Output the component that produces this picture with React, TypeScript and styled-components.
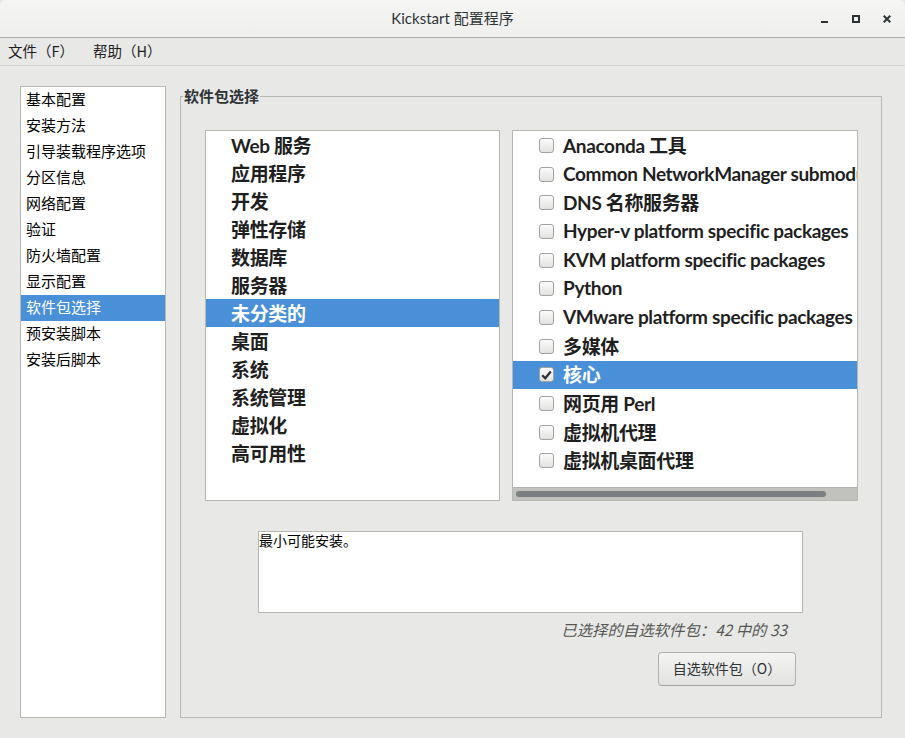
import React from "react";
import styled, { createGlobalStyle } from "styled-components";

const GlobalStyle = createGlobalStyle`
  html, body { margin: 0; padding: 0; background: #e8e8e7; }
  body { font-family: "Noto Sans CJK SC", "Noto Sans", sans-serif; }
  * { box-sizing: border-box; }
`;

const Window = styled.div`
  width: 905px;
  height: 738px;
  display: flex;
  flex-direction: column;
  background: #e8e8e7;
  overflow: hidden;
`;

const TitleBar = styled.header`
  height: 38px;
  flex: none;
  display: grid;
  grid-template-columns: 1fr auto 1fr;
  align-items: center;
  background: linear-gradient(#f5f5f4, #efefee);
  border-bottom: 1px solid #a9a9a7;
  border-radius: 6px 6px 0 0;
`;

const Title = styled.div`
  grid-column: 2;
  font: 15px "Lato", "Noto Sans CJK SC", sans-serif;
  color: #2e3436;
  padding-bottom: 2px;
`;

const Controls = styled.div`
  grid-column: 3;
  justify-self: end;
  display: flex;
  align-items: center;
  gap: 23px;
  padding-right: 14px;
  color: #2e3436;
  svg { display: block; }
`;

const MenuBar = styled.nav`
  height: 28px;
  flex: none;
  display: flex;
  align-items: center;
  gap: 19px;
  padding: 0 8px 2px;
  border-bottom: 1px solid #d3d3d1;
  font-size: 14.5px;
  color: #1e1e1e;
`;

const MenuItem = styled.span``;

const Body = styled.main`
  flex: 1;
  min-height: 0;
  display: flex;
  gap: 14px;
  padding: 20px 23px 20px 20px;
`;

const Sidebar = styled.ul`
  width: 146px;
  flex: none;
  margin: 0;
  padding: 0;
  list-style: none;
  background: #fff;
  border: 1px solid #b7b7b4;
`;

const SideRow = styled.li<{ $active?: boolean }>`
  height: 26px;
  display: flex;
  align-items: center;
  padding: 0 0 3px 5px;
  font-size: 15px;
  color: ${(p) => (p.$active ? "#fff" : "#000")};
  background: ${(p) => (p.$active ? "#4a90d9" : "transparent")};
`;

const Frame = styled.fieldset`
  flex: 1;
  min-width: 0;
  margin: 0;
  padding: 0;
  border: 1px solid #b7b7b4;
`;

const Legend = styled.legend`
  margin-left: 2px;
  padding: 0 1px;
  font-size: 15px;
  font-weight: 700;
  line-height: 20px;
  color: #2e3436;
`;

const FrameContent = styled.div`
  display: flex;
  flex-direction: column;
  padding: 24px 23px 0 24px;
`;

const Lists = styled.div`
  display: grid;
  grid-template-columns: 295px 346px;
  gap: 12px;
  height: 371px;
`;

const ListBox = styled.div`
  background: #fff;
  border: 1px solid #b7b7b4;
  display: flex;
  flex-direction: column;
  overflow: hidden;
`;

const Rows = styled.div`
  flex: 1;
  min-height: 0;
  overflow: hidden;
`;

const GroupRow = styled.div<{ $active?: boolean }>`
  height: 28px;
  display: flex;
  align-items: center;
  padding: 0 0 2px 25px;
  font: 700 19px "Lato", "Noto Sans CJK SC", sans-serif;
  letter-spacing: -0.35px;
  color: ${(p) => (p.$active ? "#fff" : "#1f1f1f")};
  background: ${(p) => (p.$active ? "#4a90d9" : "transparent")};
  white-space: nowrap;
`;

const PkgRow = styled.div<{ $active?: boolean }>`
  height: 28.7px;
  display: flex;
  align-items: center;
  gap: 9px;
  padding: 0 0 2px 26px;
  font: 700 19px "Lato", "Noto Sans CJK SC", sans-serif;
  letter-spacing: -0.35px;
  color: ${(p) => (p.$active ? "#fff" : "#1f1f1f")};
  background: ${(p) => (p.$active ? "#4a90d9" : "transparent")};
  white-space: nowrap;
`;

const Check = styled.span`
  flex: none;
  width: 15px;
  height: 15px;
  margin-top: 2px;
  border: 1px solid #a2a2a0;
  border-radius: 3px;
  background: linear-gradient(#fbfbfb, #e2e2e0);
  display: flex;
  align-items: center;
  justify-content: center;
  svg { display: block; }
`;

const HScroll = styled.div`
  flex: none;
  height: 13px;
  background: #c1c2be;
  border-top: 1px solid #b3b4b0;
  display: flex;
  align-items: center;
  padding: 0 31px 0 3px;
`;

const Thumb = styled.div`
  flex: 1;
  height: 6px;
  border-radius: 3px;
  background: #7c7f81;
`;

const Description = styled.div`
  margin: 30px 0 0 53px;
  width: 545px;
  height: 82px;
  background: #fff;
  border: 1px solid #b7b7b4;
  padding: 0;
  font-size: 14px;
  line-height: 17px;
  color: #000;
`;

const Status = styled.div`
  align-self: flex-end;
  margin: 6px 71px 0 0;
  line-height: 20px;
  font-size: 15.4px;
  font-style: italic;
  color: #555753;
`;

const Button = styled.button`
  align-self: flex-end;
  margin: 13px 62px 0 0;
  width: 138px;
  height: 34px;
  border: 1px solid #b0b0ad;
  border-bottom-color: #a2a2a0;
  border-radius: 4px;
  background: linear-gradient(#f4f4f3, #e2e2e0);
  font-family: "Noto Sans CJK SC", sans-serif;
  font-size: 14px;
  color: #2e3436;
  padding: 0 0 2px;
`;

const sideItems = [
  "基本配置",
  "安装方法",
  "引导装载程序选项",
  "分区信息",
  "网络配置",
  "验证",
  "防火墙配置",
  "显示配置",
  "软件包选择",
  "预安装脚本",
  "安装后脚本",
];

const groups = [
  "Web 服务",
  "应用程序",
  "开发",
  "弹性存储",
  "数据库",
  "服务器",
  "未分类的",
  "桌面",
  "系统",
  "系统管理",
  "虚拟化",
  "高可用性",
];

const packages = [
  { name: "Anaconda 工具" },
  { name: "Common NetworkManager submodules" },
  { name: "DNS 名称服务器" },
  { name: "Hyper-v platform specific packages" },
  { name: "KVM platform specific packages" },
  { name: "Python" },
  { name: "VMware platform specific packages" },
  { name: "多媒体" },
  { name: "核心", checked: true },
  { name: "网页用 Perl" },
  { name: "虚拟机代理" },
  { name: "虚拟机桌面代理" },
];

export default function App() {
  return (
    <>
      <GlobalStyle />
      <Window>
        <TitleBar>
          <Title>Kickstart 配置程序</Title>
          <Controls>
            <svg width="8" height="8" viewBox="0 0 8 8">
              <rect x="0" y="6" width="7" height="2" fill="currentColor" />
            </svg>
            <svg width="8" height="8" viewBox="0 0 8 8">
              <rect x="1" y="1" width="6" height="6" fill="none" stroke="currentColor" strokeWidth="2" />
            </svg>
            <svg width="8" height="8" viewBox="0 0 8 8">
              <path d="M0.7 0.7 L7.3 7.3 M7.3 0.7 L0.7 7.3" stroke="currentColor" strokeWidth="2" />
            </svg>
          </Controls>
        </TitleBar>
        <MenuBar>
          <MenuItem>文件（F）</MenuItem>
          <MenuItem>帮助（H）</MenuItem>
        </MenuBar>
        <Body>
          <Sidebar>
            {sideItems.map((s) => (
              <SideRow key={s} $active={s === "软件包选择"}>
                {s}
              </SideRow>
            ))}
          </Sidebar>
          <Frame>
            <Legend>软件包选择</Legend>
            <FrameContent>
              <Lists>
                <ListBox>
                  <Rows>
                    {groups.map((g) => (
                      <GroupRow key={g} $active={g === "未分类的"}>
                        {g}
                      </GroupRow>
                    ))}
                  </Rows>
                </ListBox>
                <ListBox>
                  <Rows>
                    {packages.map((p) => (
                      <PkgRow key={p.name} $active={!!p.checked}>
                        <Check>
                          {p.checked && (
                            <svg width="11" height="10" viewBox="0 0 11 10">
                              <path
                                d="M1.2 5.2 L4.2 8.2 L9.8 1.4"
                                fill="none"
                                stroke="#2e3436"
                                strokeWidth="2.3"
                              />
                            </svg>
                          )}
                        </Check>
                        {p.name}
                      </PkgRow>
                    ))}
                  </Rows>
                  <HScroll>
                    <Thumb />
                  </HScroll>
                </ListBox>
              </Lists>
              <Description>最小可能安装。</Description>
              <Status>已选择的自选软件包：42 中的 33</Status>
              <Button>自选软件包（O）</Button>
            </FrameContent>
          </Frame>
        </Body>
      </Window>
    </>
  );
}
